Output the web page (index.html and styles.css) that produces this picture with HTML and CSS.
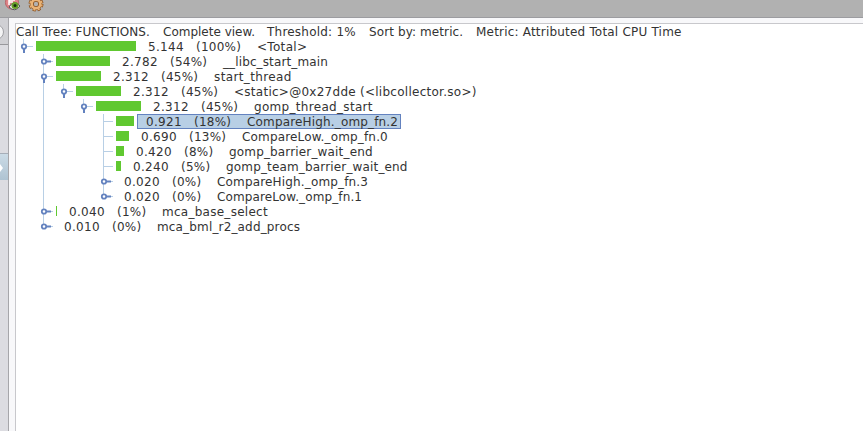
FILE: index.html
```html
<!DOCTYPE html>
<html lang="en"><head><meta charset="utf-8"><title>Call Tree</title><link rel="stylesheet" href="styles.css"></head>
<body>
<header class="toolbar">
<svg class="tool" width="18" height="17" viewBox="0 0 18 17"><circle cx="8" cy="2.5" r="6.6" fill="#df8488" stroke="#b7656a"/><path d="M5 0v5M5 0h6M5 2h4" stroke="#fff" stroke-width="1.5"/><path d="M5 7Q10-1 16 6Q11 13 5 7" fill="#eee" stroke="#56565a"/><circle cx="11" cy="5.5" r="3.5" fill="#669f28"/><circle cx="11" cy="5.5" r="1.5" fill="#183010"/></svg>
<svg class="tool" width="16" height="17" viewBox="0 0 16 17"><circle cx="8" cy="4" r="6.1" fill="none" stroke="#8b5424" stroke-width="2.8" stroke-dasharray="3 1.79"/><circle cx="8" cy="4" r="4.2" fill="none" stroke="#8b5424" stroke-width="4"/><circle cx="8" cy="4" r="6" fill="none" stroke="#eab477" stroke-width="1.4" stroke-dasharray="2 2.71" stroke-dashoffset="-.5"/><circle cx="8" cy="4" r="4.3" fill="none" stroke="#eab477" stroke-width="2.6"/></svg>
</header>
<div class="workspace">
<aside class="rail"><div class="rail-top"><i class="knob"></i></div><div class="rail-selected"><svg width="8" height="26"><path d="M-2 12h2v-2l3 4-3 4v-2h-2z" fill="#fff"/></svg></div></aside>
<main class="panel">
<div class="summary"><span class="s1">Call Tree: FUNCTIONS.</span><span class="s2">Complete view.</span><span class="s3">Threshold: 1%</span><span class="s4">Sort by: metric.</span><span class="s5">Metric: Attributed Total CPU Time</span></div>
<svg width="0" height="0" class="defs"><defs>
<g id="open"><path d="M8.5 0v5M11 7.5h7" stroke="#b8cfe5"/><path d="M8 9h2v5h-2z" fill="#6382bf"/><circle cx="9" cy="7.5" r="2.2" fill="#fff" stroke="#6382bf" stroke-width="1.8"/></g>
<g id="shut"><path d="M11 7.5h7" stroke="#b8cfe5"/><path d="M11 6.5h5v2h-5z" fill="#6382bf"/><circle cx="9" cy="7.5" r="2.2" fill="#fff" stroke="#6382bf" stroke-width="1.8"/></g>
<path id="leaf" d="M8 7.5h10" stroke="#b8cfe5"/>
</defs></svg>
<div class="tree">
<div class="row d0"><svg class="node"><use href="#open"/></svg><i class="bar" style="width:100px"></i><span class="label"><span class="value">5.144</span><span class="pct wide">(100%)</span><span class="name t3">&lt;Total&gt;</span></span></div>
<div class="children c1">
<div class="row d1"><svg class="node"><use href="#shut"/></svg><i class="bar" style="width:54px"></i><span class="label"><span class="value">2.782</span><span class="pct">(54%)</span><span class="name t1">__libc_start_main</span></span></div>
<div class="row d1"><svg class="node"><use href="#open"/></svg><i class="bar" style="width:45px"></i><span class="label"><span class="value">2.312</span><span class="pct">(45%)</span><span class="name t4">start_thread</span></span></div>
<div class="row d2"><svg class="node"><use href="#open"/></svg><i class="bar" style="width:45px"></i><span class="label"><span class="value">2.312</span><span class="pct">(45%)</span><span class="name t2">&lt;static&gt;@0x27dde (&lt;libcollector.so&gt;)</span></span></div>
<div class="row d3"><svg class="node"><use href="#open"/></svg><i class="bar" style="width:45px"></i><span class="label"><span class="value">2.312</span><span class="pct">(45%)</span><span class="name t3">gomp_thread_start</span></span></div>
<div class="children c4">
<div class="row d4"><svg class="node"><use href="#leaf"/></svg><i class="bar" style="width:18px"></i><span class="label selected"><span class="value">0.921</span><span class="pct">(18%)</span><span class="name">CompareHigh._omp_fn.2</span></span></div>
<div class="row d4"><svg class="node"><use href="#leaf"/></svg><i class="bar" style="width:13px"></i><span class="label"><span class="value">0.690</span><span class="pct">(13%)</span><span class="name">CompareLow._omp_fn.0</span></span></div>
<div class="row d4"><svg class="node"><use href="#leaf"/></svg><i class="bar" style="width:8px"></i><span class="label"><span class="value">0.420</span><span class="pct narrow">(8%)</span><span class="name">gomp_barrier_wait_end</span></span></div>
<div class="row d4"><svg class="node"><use href="#leaf"/></svg><i class="bar" style="width:5px"></i><span class="label"><span class="value">0.240</span><span class="pct narrow">(5%)</span><span class="name">gomp_team_barrier_wait_end</span></span></div>
<div class="row d4"><svg class="node"><use href="#shut"/></svg><span class="label zero"><span class="value">0.020</span><span class="pct narrow">(0%)</span><span class="name">CompareHigh._omp_fn.3</span></span></div>
<div class="row d4"><svg class="node"><use href="#shut"/></svg><span class="label zero"><span class="value">0.020</span><span class="pct narrow">(0%)</span><span class="name t1">CompareLow._omp_fn.1</span></span></div>
</div>
<div class="row d1"><svg class="node"><use href="#shut"/></svg><i class="bar" style="width:1px"></i><span class="label"><span class="value">0.040</span><span class="pct narrow">(1%)</span><span class="name t2">mca_base_select</span></span></div>
<div class="row d1"><svg class="node"><use href="#shut"/></svg><span class="label zero"><span class="value">0.010</span><span class="pct narrow">(0%)</span><span class="name">mca_bml_r2_add_procs</span></span></div>
</div>
</div>
</main>
</div>
</body></html>
```
FILE: styles.css
```css
* { box-sizing: border-box; }
body { margin: 0; height: 431px; overflow: hidden; display: flex; flex-direction: column; background: #f8f8fa; color: #333; font: 12px/17px "DejaVu Sans", sans-serif; }
.toolbar { height: 18px; flex: none; display: flex; gap: 6px; padding-left: 4px; background: #b1b1b1; border-bottom: 1px solid #9c9ca0; }
.tool { display: block; }
.workspace { flex: 1; display: flex; min-height: 0; }
.rail { width: 9px; flex: none; background: #dcdce1; border-right: 1px solid #a6a6aa; overflow: hidden; }
.rail-top { height: 27px; padding-top: 6px; border-bottom: 1px solid #98989c; background: #d0d0d4; }
.knob { display: block; width: 16px; height: 16px; margin-left: -12px; border: 1px solid #a0a0a5; border-radius: 50%; background: #f4f4f5; }
.rail-selected { height: 27px; margin-top: 108px; border-top: 1px solid #a6aeb8; background: linear-gradient(#cbdbe6, #afc3d2); }
.rail-selected svg { display: block; }
.panel { flex: 1; margin: 5px 0 0 6px; border-top: 1px solid #c8c8cc; border-left: 1px solid #c8c8cc; background: #fff; white-space: nowrap; }
.defs { display: block; }
.summary { height: 15px; display: flex; }
.s1 { width: 147px; letter-spacing: .05px; }
.s2 { width: 104px; }
.s3 { width: 102px; letter-spacing: .22px; }
.s4 { width: 107px; letter-spacing: .1px; }
.s5 { letter-spacing: .2px; }
.row { height: 15px; display: flex; }
.d1 { padding-left: 20px; } .d2 { padding-left: 40px; } .d3 { padding-left: 60px; } .d4 { padding-left: 80px; }
.children { background: linear-gradient(#b8cfe5, #b8cfe5) no-repeat; }
.c1 { background-size: 1px calc(100% - 10px); background-position: 27px 0; }
.c4 { background-size: 1px calc(100% - 10px); background-position: 87px 0; }
.node { width: 20px; height: 15px; flex: none; margin-left: -1px; margin-right: 1px; }
.bar { height: 10px; margin: 2px 1px 0 0; background: #60c830; }
.label { display: flex; height: 15px; padding-left: 11px; }
.zero { padding-left: 8px; }
.selected { width: 264px; margin-left: 2px; padding-left: 8px; border: 1px solid #6382bf; background: #b8cfe5; line-height: 15px; }
.value { width: 48px; letter-spacing: .3px; }
.pct { width: 53px; letter-spacing: .25px; }
.wide { width: 61px; }
.narrow { width: 45px; }
.name { letter-spacing: .16px; }
.t1 { letter-spacing: .12px; }
.t2 { letter-spacing: .265px; }
.t3 { letter-spacing: .31px; }
.t4 { letter-spacing: .38px; }
```
